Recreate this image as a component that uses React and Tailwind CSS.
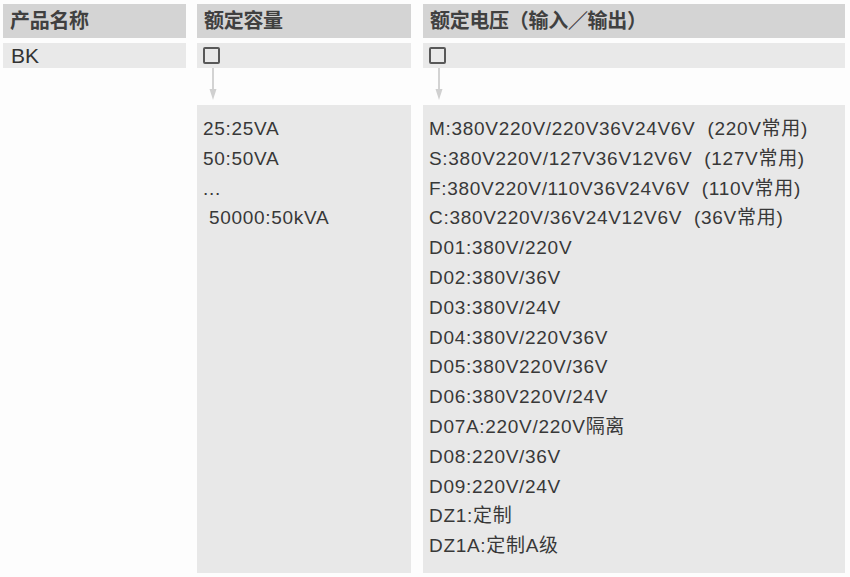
const font = { fontFamily: '"Liberation Sans", "Noto Sans CJK SC", sans-serif' }

const capacities = ['25:25VA', '50:50VA', '...', '\u00a050000:50kVA']

const voltages = [
  'M:380V220V/220V36V24V6V\u00a0 (220V常用)',
  'S:380V220V/127V36V12V6V\u00a0 (127V常用)',
  'F:380V220V/110V36V24V6V\u00a0 (110V常用)',
  'C:380V220V/36V24V12V6V\u00a0 (36V常用)',
  'D01:380V/220V',
  'D02:380V/36V',
  'D03:380V/24V',
  'D04:380V/220V36V',
  'D05:380V220V/36V',
  'D06:380V220V/24V',
  'D07A:220V/220V隔离',
  'D08:220V/36V',
  'D09:220V/24V',
  'DZ1:定制',
  'DZ1A:定制A级',
]

function Arrow() {
  return (
    <svg width="14" height="37" viewBox="0 0 14 37" className="ml-[9px]">
      <line x1="7" y1="0" x2="7" y2="26" stroke="#c4c4c4" strokeWidth="1.5" />
      <polygon points="3.5,21 10.5,21 7,32" fill="#d0d0d0" />
    </svg>
  )
}

function Box() {
  return <div className="w-[17px] h-[17px] border-2 border-[#585858] rounded-[2px] ml-[6px]" />
}

function Header({ children }) {
  return (
    <div className="h-[34px] bg-[#d4d4d4] flex items-center px-[7px] text-[20px] tracking-[-0.3px] font-semibold text-[#404040]">
      {children}
    </div>
  )
}

function Panel({ items }) {
  return (
    <div className="bg-[#e8e8e8] h-[468px] pt-[9px] px-[6px] text-[19px] tracking-[0.7px] leading-[29.8px] text-[#383838]">
      {items.map((t, i) => (
        <div key={i} className="whitespace-nowrap">{t}</div>
      ))}
    </div>
  )
}

export default function App() {
  return (
    <div className="w-[850px] h-[577px] bg-[#fdfdfd] overflow-hidden pt-[4px] pl-[3px] flex gap-[11px]" style={font}>
      <div className="w-[183px] flex flex-col gap-[5px]">
        <Header>产品名称</Header>
        <div className="h-[25px] bg-[#e9e9e9] flex items-center px-[8px] text-[21px] text-[#333]">BK</div>
      </div>

      <div className="w-[214px] flex flex-col">
        <Header>额定容量</Header>
        <div className="h-[25px] mt-[5px] bg-[#e9e9e9] flex items-center">
          <Box />
        </div>
        <Arrow />
        <Panel items={capacities} />
      </div>

      <div className="w-[422px] ml-[1px] flex flex-col">
        <Header>额定电压（输入／输出）</Header>
        <div className="h-[25px] mt-[5px] bg-[#e9e9e9] flex items-center">
          <Box />
        </div>
        <Arrow />
        <Panel items={voltages} />
      </div>
    </div>
  )
}
